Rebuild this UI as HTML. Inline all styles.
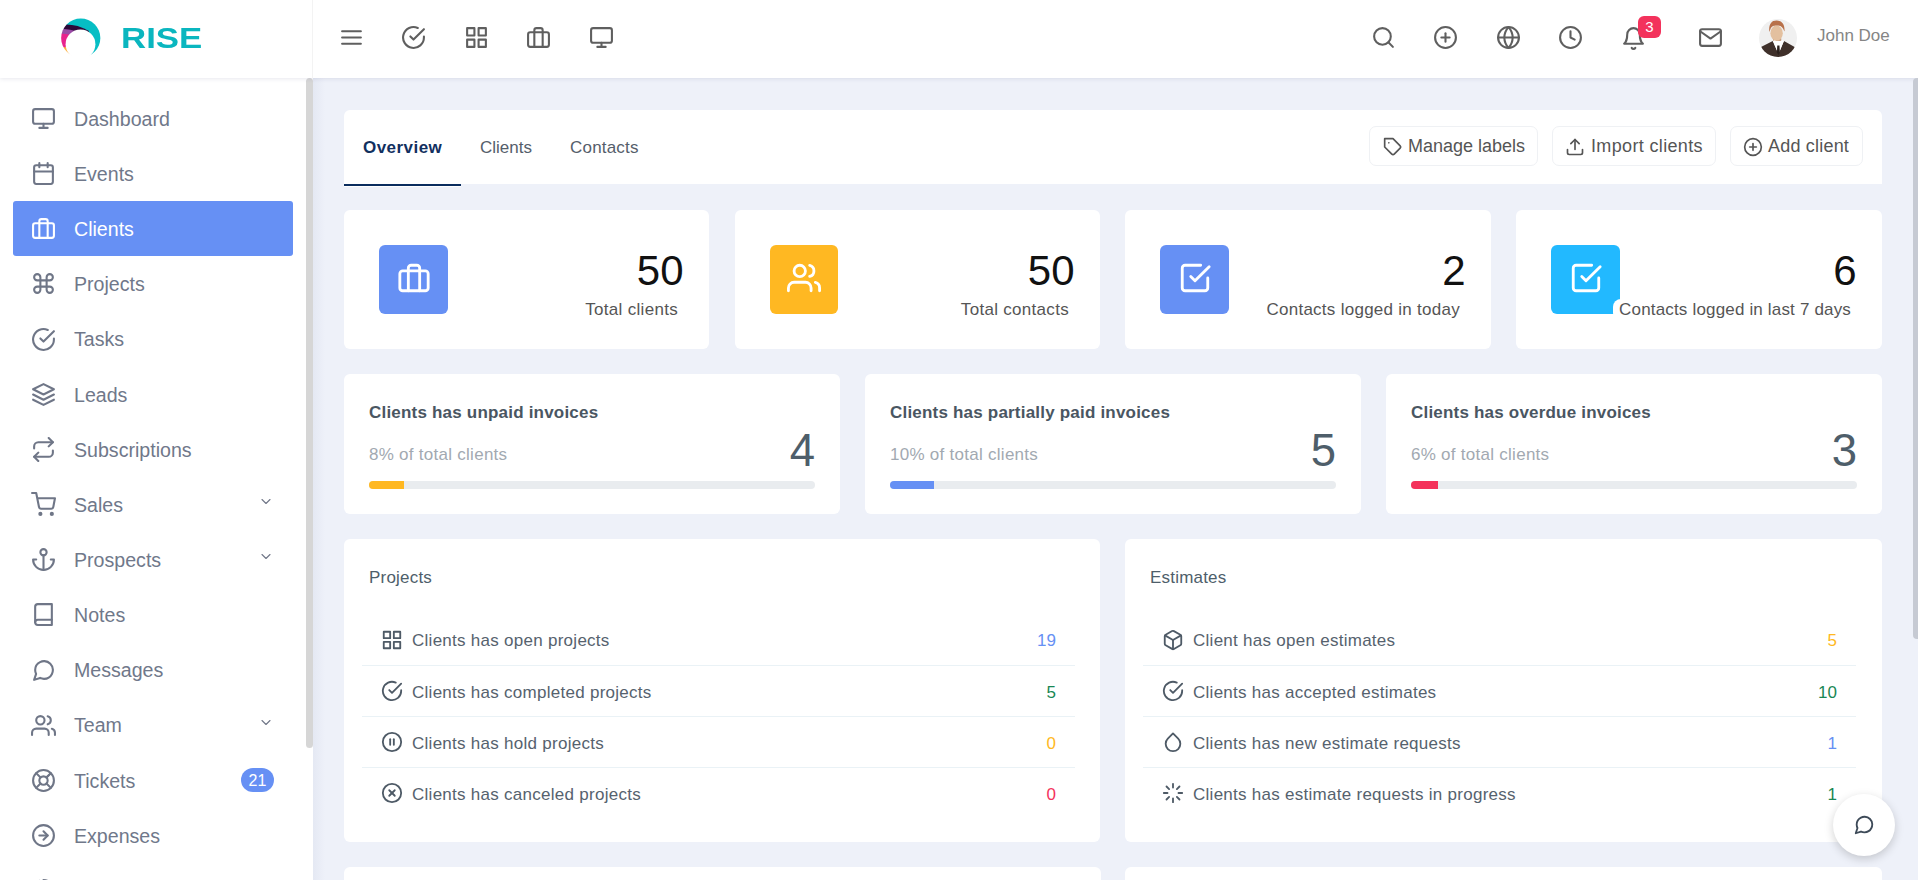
<!DOCTYPE html>
<html><head><meta charset="utf-8">
<style>
*{box-sizing:border-box;margin:0;padding:0}
html,body{width:1918px;height:880px;overflow:hidden}
body{background:#eef1f9;font-family:"Liberation Sans",sans-serif;position:relative;color:#4e5e6a}
.abs{position:absolute}
svg.i{position:absolute;fill:none;stroke:currentColor;stroke-width:2;stroke-linecap:round;stroke-linejoin:round}
#hdr{left:0;top:0;width:1918px;height:78px;background:#fff;box-shadow:0 1px 4px rgba(120,130,160,.18);z-index:5}
#logoarea{left:0;top:0;width:313px;height:78px;border-right:1px solid #f3f3f3}
#side{left:0;top:78px;width:313px;height:802px;background:#fff;z-index:3}
.mi{position:absolute;left:13px;width:280px;height:55px;color:#70788a;font-size:19.6px;border-radius:3px}
.mi span{position:absolute;left:61px;top:0.8px;line-height:55px}
.mi svg{left:17.8px;top:15px;width:25px;height:25px;color:#6f7687}
.mi.act{background:#6690f4;color:#fff}
.mi.act svg{color:#fff}
.badge{position:absolute;left:228px;top:15px;width:33px;height:24px;border-radius:12px;background:#6690f4;color:#fff;font-size:16px;line-height:26px;text-align:center}
.mi .chev{position:absolute;left:247.5px;top:21px;width:10px;height:7px}
.card{position:absolute;background:#fff;border-radius:6px}
.tab{position:absolute;top:0;height:74px;line-height:74px;font-size:16px;color:#555e6b}
.btn{position:absolute;top:16px;height:40px;border:1px solid #eff1f4;border-radius:7px;color:#555;font-size:18px;line-height:39.5px}
.stat .ib{position:absolute;left:35px;top:35px;width:69px;height:69px;border-radius:6px}
.stat .num{position:absolute;right:25.5px;top:36px;font-size:42px;color:#111;line-height:50px;text-align:right}
.stat .lbl{position:absolute;right:31px;top:89px;font-size:17px;color:#555;line-height:22px;white-space:nowrap;text-align:right;letter-spacing:0.3px;background:#fff;border-radius:8px;padding-left:6px}
.inv .t{position:absolute;left:25px;top:28.5px;font-size:17px;font-weight:bold;color:#4a5662;white-space:nowrap;letter-spacing:0.2px}
.inv .s{position:absolute;left:25px;top:71px;font-size:17px;color:#a2a9b1;white-space:nowrap;letter-spacing:0.27px}
.inv .n{position:absolute;right:25px;top:52px;font-size:45.5px;color:#4e5e6a;line-height:50px}
.inv .bar{position:absolute;left:25px;top:107px;width:446px;height:8px;border-radius:4px;background:#e9ecef;overflow:hidden}
.inv .bar i{position:absolute;left:0;top:0;height:8px}
.lst .h{position:absolute;left:25px;top:28.5px;font-size:17px;color:#4e5e6a;letter-spacing:0.2px}
.row{position:absolute;left:18px;height:51px;border-bottom:1px solid #eaf2f6;font-size:17px;color:#56626e}
.row.last{border-bottom:none}
.row span{position:absolute;left:50px;line-height:53px;white-space:nowrap;letter-spacing:0.27px}
.row b{position:absolute;right:19px;line-height:53px;font-weight:normal}
.row svg{left:20px;top:16px;color:#4e5a66}
</style></head>
<body>

<!-- HEADER -->
<div id="hdr" class="abs">
  <div id="logoarea" class="abs">
    <svg class="abs" style="left:55px;top:14px" width="50" height="46" viewBox="55 14 50 46">
      <defs><mask id="cres" maskUnits="userSpaceOnUse" x="55" y="14" width="50" height="46"><rect x="55" y="14" width="50" height="46" fill="#000"/><circle cx="80.75" cy="38" r="19.6" fill="#fff"/><circle cx="80.5" cy="44.3" r="14.9" fill="#000"/></mask></defs>
      <g mask="url(#cres)">
        <rect x="55" y="14" width="50" height="46" fill="#06bec4"/>
        <path d="M55 26 C 66 23, 78 24.5, 89 31 L 80 60 L 55 60 Z" fill="#2c0838"/>
        <path d="M55 30 C 62 28, 70 29, 77 31.5 L 68 60 L 55 60Z" fill="#9b4ba6"/>
        <path d="M55 35.5 C 59 33.5, 64 33.5, 69 34.5 L 68 60 L 55 60Z" fill="#e8238d"/>
        <path d="M55 49 L 66 47 L 74 60 L 55 60Z" fill="#fbb03f"/>
      </g>
    </svg>
    <div class="abs" style="left:121px;top:20px;font-size:30px;font-weight:bold;color:#0ab6bf;line-height:36px;transform:scaleX(1.16);transform-origin:0 0">RISE</div>
  </div>
  <!-- left icons -->
  <svg class="i" style="left:338.5px;top:24.5px;color:#5f5f5f" width="25" height="25" viewBox="0 0 24 24" stroke-width="1.8"><line x1="3" y1="12" x2="21" y2="12"/><line x1="3" y1="6" x2="21" y2="6"/><line x1="3" y1="18" x2="21" y2="18"/></svg>
  <svg class="i" style="left:400.5px;top:24.5px;color:#5f5f5f" width="25" height="25" viewBox="0 0 24 24" stroke-width="1.8"><path d="M22 11.08V12a10 10 0 1 1-5.93-9.14"/><polyline points="22 4 12 14.01 9 11.01"/></svg>
  <svg class="i" style="left:463.5px;top:24.5px;color:#5f5f5f" width="25" height="25" viewBox="0 0 24 24" stroke-width="1.8"><rect x="3" y="3" width="7" height="7"/><rect x="14" y="3" width="7" height="7"/><rect x="14" y="14" width="7" height="7"/><rect x="3" y="14" width="7" height="7"/></svg>
  <svg class="i" style="left:525.5px;top:24.5px;color:#5f5f5f" width="25" height="25" viewBox="0 0 24 24" stroke-width="1.8"><rect x="2" y="7" width="20" height="14" rx="2" ry="2"/><path d="M16 21V5a2 2 0 0 0-2-2h-4a2 2 0 0 0-2 2v16"/></svg>
  <svg class="i" style="left:588.5px;top:24.5px;color:#5f5f5f" width="25" height="25" viewBox="0 0 24 24" stroke-width="1.8"><rect x="2" y="3" width="20" height="14" rx="2" ry="2"/><line x1="8" y1="21" x2="16" y2="21"/><line x1="12" y1="17" x2="12" y2="21"/></svg>
  <!-- right icons -->
  <svg class="i" style="left:1370.5px;top:24.5px;color:#5f5f5f" width="25" height="25" viewBox="0 0 24 24" stroke-width="1.8"><circle cx="11" cy="11" r="8"/><line x1="21" y1="21" x2="16.65" y2="16.65"/></svg>
  <svg class="i" style="left:1432.5px;top:24.5px;color:#5f5f5f" width="25" height="25" viewBox="0 0 24 24" stroke-width="1.8"><circle cx="12" cy="12" r="10"/><line x1="12" y1="8" x2="12" y2="16"/><line x1="8" y1="12" x2="16" y2="12"/></svg>
  <svg class="i" style="left:1495.5px;top:24.5px;color:#5f5f5f" width="25" height="25" viewBox="0 0 24 24" stroke-width="1.8"><circle cx="12" cy="12" r="10"/><line x1="2" y1="12" x2="22" y2="12"/><path d="M12 2a15.3 15.3 0 0 1 4 10 15.3 15.3 0 0 1-4 10 15.3 15.3 0 0 1-4-10 15.3 15.3 0 0 1 4-10z"/></svg>
  <svg class="i" style="left:1557.5px;top:24.5px;color:#5f5f5f" width="25" height="25" viewBox="0 0 24 24" stroke-width="1.8"><circle cx="12" cy="12" r="10"/><polyline points="12 6 12 12 16 14"/></svg>
  <svg class="i" style="left:1620.5px;top:25.5px;color:#5f5f5f" width="25" height="25" viewBox="0 0 24 24" stroke-width="1.8"><path d="M18 8A6 6 0 0 0 6 8c0 7-3 9-3 9h18s-3-2-3-9"/><path d="M13.73 21a2 2 0 0 1-3.46 0"/></svg>
  <div class="abs" style="left:1638px;top:16px;width:23px;height:22px;border-radius:6px;background:#f3325c;color:#fff;font-size:15px;font-weight:normal;text-align:center;line-height:22px">3</div>
  <svg class="i" style="left:1697.5px;top:24.5px;color:#5f5f5f" width="25" height="25" viewBox="0 0 24 24" stroke-width="1.8"><path d="M4 4h16c1.1 0 2 .9 2 2v12c0 1.1-.9 2-2 2H4c-1.1 0-2-.9-2-2V6c0-1.1.9-2 2-2z"/><polyline points="22,6 12,13 2,6"/></svg>
  <!-- avatar -->
  <svg class="abs" style="left:1759px;top:19px" width="38" height="38" viewBox="0 0 38 38">
    <defs><clipPath id="avc"><circle cx="19" cy="19" r="19"/></clipPath></defs>
    <g clip-path="url(#avc)">
      <rect width="38" height="38" fill="#f0f0f0"/>
      <path d="M14 18 L14 22.5 L19 25.5 L22.5 22.5 L22 18Z" fill="#c9a184"/>
      <path d="M1 28.5 L13.8 22 L19.4 26 L25 22 L36.5 28.5 L38 38 L0 38Z" fill="#3f302a"/><path d="M13.8 22 L19.4 35 L25 22 L23 21 L19.4 24 L16 21Z" fill="#fff"/>
      <path d="M13.8 22 L24.8 22 L19.6 35Z" fill="#fff"/>
      <path d="M18.3 26.5 L20.5 26.5 L20.9 33.5 L19.4 36 L17.9 33.5Z" fill="#2b201c"/>
      <ellipse cx="17.6" cy="14.2" rx="6.2" ry="7.6" fill="#e3c09f"/>
      <path d="M10.3 13 C9.5 6 12 1.6 17.5 1.6 C23 1.6 26 5 25.5 12.5 L24 9.5 C22.5 7 20 6.5 17.6 6.5 C15 6.5 12.5 7 11.5 10Z" fill="#b8714a"/>
    </g>
  </svg>
  <div class="abs" style="left:1817px;top:25px;font-size:17px;color:#858585;line-height:22px">John Doe</div>
</div>

<!-- SIDEBAR -->
<div id="side" class="abs">
<div class="mi" style="top:13.0px"><svg class="i" width="24" height="24" viewBox="0 0 24 24" stroke-width="1.8"><rect x="2" y="3" width="20" height="14" rx="2" ry="2"/><line x1="8" y1="21" x2="16" y2="21"/><line x1="12" y1="17" x2="12" y2="21"/></svg><span>Dashboard</span></div>
<div class="mi" style="top:68.15px"><svg class="i" width="24" height="24" viewBox="0 0 24 24" stroke-width="1.8"><rect x="3" y="4" width="18" height="18" rx="2" ry="2"/><line x1="16" y1="2" x2="16" y2="6"/><line x1="8" y1="2" x2="8" y2="6"/><line x1="3" y1="10" x2="21" y2="10"/></svg><span>Events</span></div>
<div class="mi act" style="top:123.3px"><svg class="i" width="24" height="24" viewBox="0 0 24 24" stroke-width="1.8"><rect x="2" y="7" width="20" height="14" rx="2" ry="2"/><path d="M16 21V5a2 2 0 0 0-2-2h-4a2 2 0 0 0-2 2v16"/></svg><span>Clients</span></div>
<div class="mi" style="top:178.45px"><svg class="i" width="24" height="24" viewBox="0 0 24 24" stroke-width="1.8"><path d="M18 3a3 3 0 0 0-3 3v12a3 3 0 0 0 3 3 3 3 0 0 0 3-3 3 3 0 0 0-3-3H6a3 3 0 0 0-3 3 3 3 0 0 0 3 3 3 3 0 0 0 3-3V6a3 3 0 0 0-3-3 3 3 0 0 0-3 3 3 3 0 0 0 3 3h12a3 3 0 0 0 3-3 3 3 0 0 0-3-3z"/></svg><span>Projects</span></div>
<div class="mi" style="top:233.6px"><svg class="i" width="24" height="24" viewBox="0 0 24 24" stroke-width="1.8"><path d="M22 11.08V12a10 10 0 1 1-5.93-9.14"/><polyline points="22 4 12 14.01 9 11.01"/></svg><span>Tasks</span></div>
<div class="mi" style="top:288.75px"><svg class="i" width="24" height="24" viewBox="0 0 24 24" stroke-width="1.8"><polygon points="12 2 2 7 12 12 22 7 12 2"/><polyline points="2 17 12 22 22 17"/><polyline points="2 12 12 17 22 12"/></svg><span>Leads</span></div>
<div class="mi" style="top:343.9px"><svg class="i" width="24" height="24" viewBox="0 0 24 24" stroke-width="1.8"><polyline points="17 1 21 5 17 9"/><path d="M3 11V9a4 4 0 0 1 4-4h14"/><polyline points="7 23 3 19 7 15"/><path d="M21 13v2a4 4 0 0 1-4 4H3"/></svg><span>Subscriptions</span></div>
<div class="mi" style="top:399.05px"><svg class="i" width="24" height="24" viewBox="0 0 24 24" stroke-width="1.8"><circle cx="9" cy="21" r="1"/><circle cx="20" cy="21" r="1"/><path d="M1 1h4l2.68 13.39a2 2 0 0 0 2 1.61h9.72a2 2 0 0 0 2-1.61L23 6H6"/></svg><span>Sales</span><svg class="chev" viewBox="0 0 10 7"><polyline points="1 1.5 5 5.5 9 1.5" fill="none" stroke="#6f7687" stroke-width="1.1" stroke-linecap="round" stroke-linejoin="round"/></svg></div>
<div class="mi" style="top:454.2px"><svg class="i" width="24" height="24" viewBox="0 0 24 24" stroke-width="1.8"><circle cx="12" cy="5" r="3"/><line x1="12" y1="22" x2="12" y2="8"/><path d="M5 12H2a10 10 0 0 0 20 0h-3"/></svg><span>Prospects</span><svg class="chev" viewBox="0 0 10 7"><polyline points="1 1.5 5 5.5 9 1.5" fill="none" stroke="#6f7687" stroke-width="1.1" stroke-linecap="round" stroke-linejoin="round"/></svg></div>
<div class="mi" style="top:509.35px"><svg class="i" width="24" height="24" viewBox="0 0 24 24" stroke-width="1.8"><path d="M4 19.5A2.5 2.5 0 0 1 6.5 17H20"/><path d="M6.5 2H20v20H6.5A2.5 2.5 0 0 1 4 19.5v-15A2.5 2.5 0 0 1 6.5 2z"/></svg><span>Notes</span></div>
<div class="mi" style="top:564.5px"><svg class="i" width="24" height="24" viewBox="0 0 24 24" stroke-width="1.8"><path d="M21 11.5a8.38 8.38 0 0 1-.9 3.8 8.5 8.5 0 0 1-7.6 4.7 8.38 8.38 0 0 1-3.8-.9L3 21l1.9-5.7a8.38 8.38 0 0 1-.9-3.8 8.5 8.5 0 0 1 4.7-7.6 8.38 8.38 0 0 1 3.8-.9h.5a8.48 8.48 0 0 1 8 8v.5z"/></svg><span>Messages</span></div>
<div class="mi" style="top:619.65px"><svg class="i" width="24" height="24" viewBox="0 0 24 24" stroke-width="1.8"><path d="M17 21v-2a4 4 0 0 0-4-4H5a4 4 0 0 0-4 4v2"/><circle cx="9" cy="7" r="4"/><path d="M23 21v-2a4 4 0 0 0-3-3.87"/><path d="M16 3.13a4 4 0 0 1 0 7.75"/></svg><span>Team</span><svg class="chev" viewBox="0 0 10 7"><polyline points="1 1.5 5 5.5 9 1.5" fill="none" stroke="#6f7687" stroke-width="1.1" stroke-linecap="round" stroke-linejoin="round"/></svg></div>
<div class="mi" style="top:674.8px"><svg class="i" width="24" height="24" viewBox="0 0 24 24" stroke-width="1.8"><circle cx="12" cy="12" r="10"/><circle cx="12" cy="12" r="4"/><line x1="4.93" y1="4.93" x2="9.17" y2="9.17"/><line x1="14.83" y1="14.83" x2="19.07" y2="19.07"/><line x1="14.83" y1="9.17" x2="19.07" y2="4.93"/><line x1="14.83" y1="9.17" x2="18.36" y2="5.64"/><line x1="4.93" y1="19.07" x2="9.17" y2="14.83"/></svg><span>Tickets</span><div class="badge">21</div></div>
<div class="mi" style="top:729.95px"><svg class="i" width="24" height="24" viewBox="0 0 24 24" stroke-width="1.8"><circle cx="12" cy="12" r="10"/><polyline points="12 16 16 12 12 8"/><line x1="8" y1="12" x2="16" y2="12"/></svg><span>Expenses</span></div>
<div class="mi" style="top:785.1px"><svg class="i" width="24" height="24" viewBox="0 0 24 24" stroke-width="1.8"><path d="M21.21 15.89A10 10 0 1 1 8 2.83"/><path d="M22 12A10 10 0 0 0 12 2v10z"/></svg><span>Reports</span></div>
<div class="abs" style="left:306px;top:0;width:7px;height:670px;border-radius:4px;background:#d6d6d6"></div>
</div>

<div class="abs" style="left:313px;top:78px;width:12px;height:802px;background:linear-gradient(to right,rgba(190,198,220,.2),rgba(190,198,220,0))"></div>
<div id="main">
<div class="card" style="left:344px;top:110px;width:1538px;height:74px;border-radius:6px 6px 0 0">
<div class="tab" style="left:19px;top:1px;font-weight:bold;color:#12305f;font-size:17px;letter-spacing:0.45px">Overview</div>
<div class="abs" style="left:0;top:74px;width:117px;height:3px;background:#fff;border-top:2px solid #0a2d5e"></div>
<div class="tab" style="left:136px;top:1px;font-size:17px">Clients</div>
<div class="tab" style="left:226px;top:1px;font-size:17px;letter-spacing:0.2px">Contacts</div>
<div class="btn" style="left:1025px;width:169px"><svg class="i" style="left:12.5px;top:10px;width:20px;height:20px;color:#555" width="24" height="24" viewBox="0 0 24 24" stroke-width="1.8" ><path d="M20.59 13.41l-7.17 7.17a2 2 0 0 1-2.83 0L2 12V2h10l8.59 8.59a2 2 0 0 1 0 2.82z"/><line x1="7" y1="7" x2="7.01" y2="7"/></svg><span class="abs" style="left:38px">Manage labels</span></div>
<div class="btn" style="left:1208px;width:164px"><svg class="i" style="left:11.5px;top:10px;width:20px;height:20px;color:#555" width="24" height="24" viewBox="0 0 24 24" stroke-width="1.8" ><path d="M21 15v4a2 2 0 0 1-2 2H5a2 2 0 0 1-2-2v-4"/><polyline points="17 8 12 3 7 8"/><line x1="12" y1="3" x2="12" y2="15"/></svg><span class="abs" style="left:38px;letter-spacing:0.35px">Import clients</span></div>
<div class="btn" style="left:1386px;width:133px"><svg class="i" style="left:11.5px;top:10px;width:20px;height:20px;color:#555" width="24" height="24" viewBox="0 0 24 24" stroke-width="1.8" ><circle cx="12" cy="12" r="10"/><line x1="12" y1="8" x2="12" y2="16"/><line x1="8" y1="12" x2="16" y2="12"/></svg><span class="abs" style="left:37px;letter-spacing:0.2px">Add client</span></div>
</div>
<div class="card stat" style="left:344px;top:210px;width:365px;height:139px"><div class="ib" style="background:#6690f4"><svg class="i" style="left:17.5px;top:16px;width:34px;height:34px;color:#fff" width="24" height="24" viewBox="0 0 24 24" stroke-width="1.75"><rect x="2" y="7" width="20" height="14" rx="2" ry="2"/><path d="M16 21V5a2 2 0 0 0-2-2h-4a2 2 0 0 0-2 2v16"/></svg></div><div class="num">50</div><div class="lbl">Total clients</div></div>
<div class="card stat" style="left:735px;top:210px;width:365px;height:139px"><div class="ib" style="background:#ffb822;width:68px"><svg class="i" style="left:16.5px;top:16px;width:34px;height:34px;color:#fff" width="24" height="24" viewBox="0 0 24 24" stroke-width="1.75"><path d="M17 21v-2a4 4 0 0 0-4-4H5a4 4 0 0 0-4 4v2"/><circle cx="9" cy="7" r="4"/><path d="M23 21v-2a4 4 0 0 0-3-3.87"/><path d="M16 3.13a4 4 0 0 1 0 7.75"/></svg></div><div class="num">50</div><div class="lbl">Total contacts</div></div>
<div class="card stat" style="left:1125px;top:210px;width:366px;height:139px"><div class="ib" style="background:#6690f4"><svg class="i" style="left:17.5px;top:16px;width:34px;height:34px;color:#fff" width="24" height="24" viewBox="0 0 24 24" stroke-width="1.75"><polyline points="9 11 12 14 22 4"/><path d="M21 12v7a2 2 0 0 1-2 2H5a2 2 0 0 1-2-2V5a2 2 0 0 1 2-2h11"/></svg></div><div class="num">2</div><div class="lbl" style="letter-spacing:0.27px">Contacts logged in today</div></div>
<div class="card stat" style="left:1516px;top:210px;width:366px;height:139px"><div class="ib" style="background:#22b9ff"><svg class="i" style="left:17.5px;top:16px;width:34px;height:34px;color:#fff" width="24" height="24" viewBox="0 0 24 24" stroke-width="1.75"><polyline points="9 11 12 14 22 4"/><path d="M21 12v7a2 2 0 0 1-2 2H5a2 2 0 0 1-2-2V5a2 2 0 0 1 2-2h11"/></svg></div><div class="num">6</div><div class="lbl" style="letter-spacing:0.17px">Contacts logged in last 7 days</div></div>
<div class="card inv" style="left:344px;top:374px;width:496px;height:140px"><div class="t">Clients has unpaid invoices</div><div class="s">8% of total clients</div><div class="n">4</div><div class="bar"><i style="width:35px;background:#ffb822"></i></div></div>
<div class="card inv" style="left:865px;top:374px;width:496px;height:140px"><div class="t">Clients has partially paid invoices</div><div class="s">10% of total clients</div><div class="n">5</div><div class="bar"><i style="width:44px;background:#6690f4"></i></div></div>
<div class="card inv" style="left:1386px;top:374px;width:496px;height:140px"><div class="t">Clients has overdue invoices</div><div class="s">6% of total clients</div><div class="n">3</div><div class="bar"><i style="width:27px;background:#f4325b"></i></div></div>
<div class="card lst" style="left:344px;top:539px;width:756px;height:303px"><div class="h">Projects</div><div class="row" style="top:76px;width:713px"><svg class="i" style="left:19px;top:14.25px;width:22px;height:22px" width="24" height="24" viewBox="0 0 24 24" stroke-width="1.8" ><rect x="3" y="3" width="7" height="7"/><rect x="14" y="3" width="7" height="7"/><rect x="14" y="14" width="7" height="7"/><rect x="3" y="14" width="7" height="7"/></svg><span style="top:-1px">Clients has open projects</span><b style="top:-1px;color:#6690f4">19</b></div><div class="row" style="top:127px;width:713px"><svg class="i" style="left:19px;top:14.25px;width:22px;height:22px" width="24" height="24" viewBox="0 0 24 24" stroke-width="1.8" ><path d="M22 11.08V12a10 10 0 1 1-5.93-9.14"/><polyline points="22 4 12 14.01 9 11.01"/></svg><span>Clients has completed projects</span><b style="color:#198754">5</b></div><div class="row" style="top:178px;width:713px"><svg class="i" style="left:19px;top:14.25px;width:22px;height:22px" width="24" height="24" viewBox="0 0 24 24" stroke-width="1.8" ><circle cx="12" cy="12" r="10"/><line x1="10" y1="15" x2="10" y2="9"/><line x1="14" y1="15" x2="14" y2="9"/></svg><span>Clients has hold projects</span><b style="color:#ffb822">0</b></div><div class="row last" style="top:229px;width:713px"><svg class="i" style="left:19px;top:14.25px;width:22px;height:22px" width="24" height="24" viewBox="0 0 24 24" stroke-width="1.8" ><circle cx="12" cy="12" r="10"/><line x1="15" y1="9" x2="9" y2="15"/><line x1="9" y1="9" x2="15" y2="15"/></svg><span>Clients has canceled projects</span><b style="color:#f4325b">0</b></div></div>
<div class="card lst" style="left:1125px;top:539px;width:757px;height:303px"><div class="h">Estimates</div><div class="row" style="top:76px;width:713px"><svg class="i" style="left:19px;top:14.25px;width:22px;height:22px" width="24" height="24" viewBox="0 0 24 24" stroke-width="1.8" ><path d="M21 16V8a2 2 0 0 0-1-1.73l-7-4a2 2 0 0 0-2 0l-7 4A2 2 0 0 0 3 8v8a2 2 0 0 0 1 1.73l7 4a2 2 0 0 0 2 0l7-4A2 2 0 0 0 21 16z"/><polyline points="3.27 6.96 12 12.01 20.73 6.96"/><line x1="12" y1="22.08" x2="12" y2="12"/></svg><span style="top:-1px">Client has open estimates</span><b style="top:-1px;color:#ffb822">5</b></div><div class="row" style="top:127px;width:713px"><svg class="i" style="left:19px;top:14.25px;width:22px;height:22px" width="24" height="24" viewBox="0 0 24 24" stroke-width="1.8" ><path d="M22 11.08V12a10 10 0 1 1-5.93-9.14"/><polyline points="22 4 12 14.01 9 11.01"/></svg><span>Clients has accepted estimates</span><b style="color:#198754">10</b></div><div class="row" style="top:178px;width:713px"><svg class="i" style="left:19px;top:14.25px;width:22px;height:22px" width="24" height="24" viewBox="0 0 24 24" stroke-width="1.8" ><path d="M12 2.69l5.66 5.66a8 8 0 1 1-11.31 0z"/></svg><span>Clients has new estimate requests</span><b style="color:#6690f4">1</b></div><div class="row last" style="top:229px;width:713px"><svg class="i" style="left:19px;top:14.25px;width:22px;height:22px" width="24" height="24" viewBox="0 0 24 24" stroke-width="1.8" ><line x1="12" y1="2" x2="12" y2="6"/><line x1="12" y1="18" x2="12" y2="22"/><line x1="4.93" y1="4.93" x2="7.76" y2="7.76"/><line x1="16.24" y1="16.24" x2="19.07" y2="19.07"/><line x1="2" y1="12" x2="6" y2="12"/><line x1="18" y1="12" x2="22" y2="12"/><line x1="4.93" y1="19.07" x2="7.76" y2="16.24"/><line x1="16.24" y1="7.76" x2="19.07" y2="4.93"/></svg><span>Clients has estimate requests in progress</span><b style="color:#198754">1</b></div></div>
<div class="card" style="left:344px;top:867px;width:757px;height:100px"></div>
<div class="card" style="left:1125px;top:867px;width:757px;height:100px"></div>
<div class="abs" style="left:1833px;top:794px;width:62px;height:62px;border-radius:31px;background:#fff;box-shadow:0 3px 10px rgba(0,0,0,.18);z-index:6"><svg class="i" style="left:20px;top:20px;width:22px;height:22px;color:#3d4a58" width="24" height="24" viewBox="0 0 24 24" stroke-width="1.8" ><path d="M21 11.5a8.38 8.38 0 0 1-.9 3.8 8.5 8.5 0 0 1-7.6 4.7 8.38 8.38 0 0 1-3.8-.9L3 21l1.9-5.7a8.38 8.38 0 0 1-.9-3.8 8.5 8.5 0 0 1 4.7-7.6 8.38 8.38 0 0 1 3.8-.9h.5a8.48 8.48 0 0 1 8 8v.5z"/></svg></div>
<div class="abs" style="left:1913px;top:78px;width:5px;height:561px;border-radius:4px 0 0 4px;background:#c6cad3;z-index:6"></div>
</div>
</body></html>
